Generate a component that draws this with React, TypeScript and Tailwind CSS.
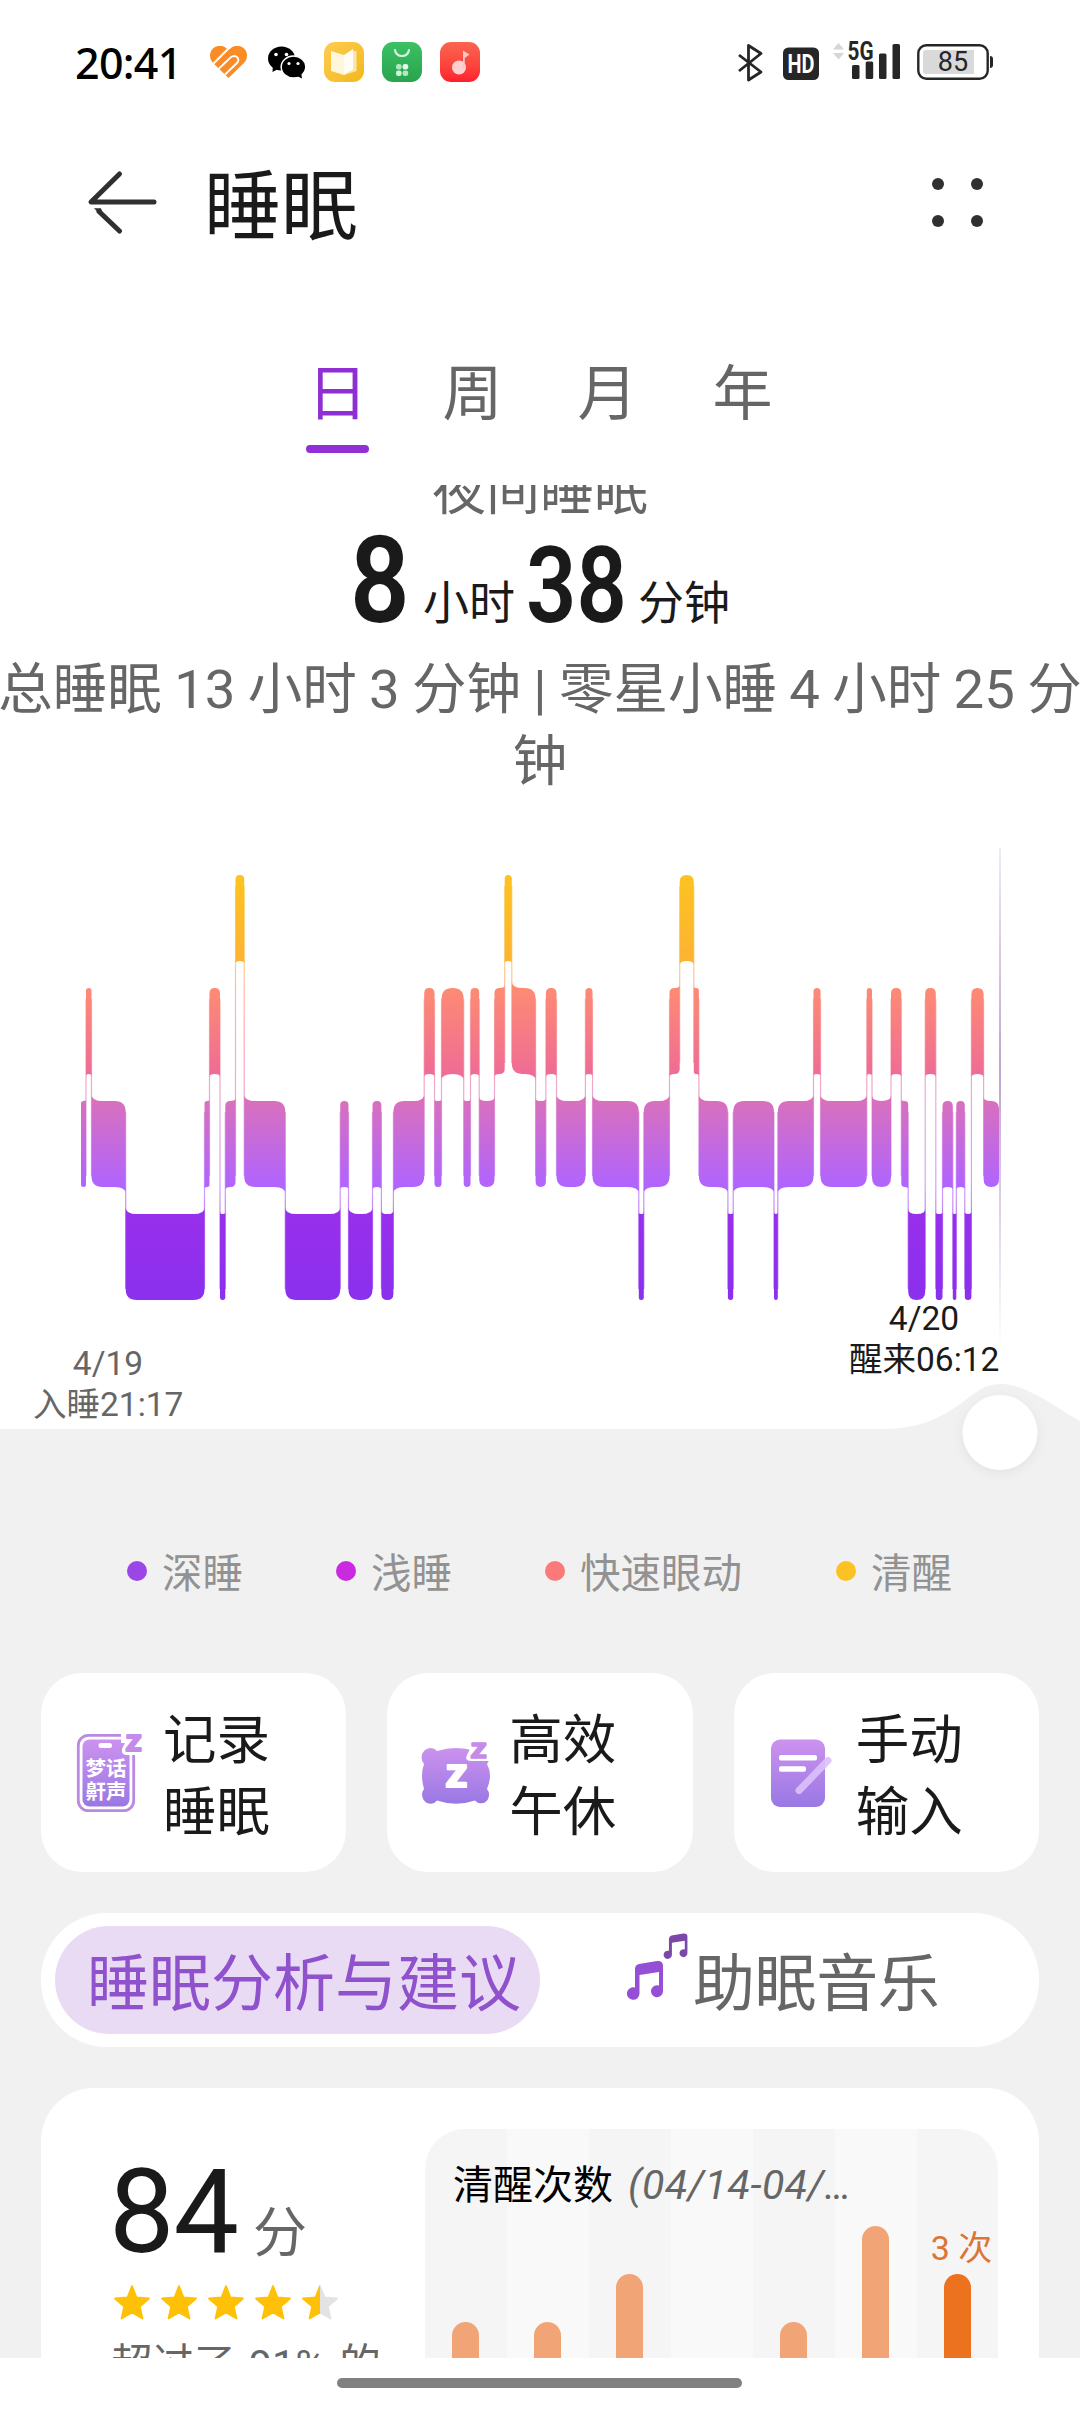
type Stage = 0 | 1 | 2 | 3 // awake, rem, light, deep

const BAND_TOP = 875
const BAND_STEP = 113
const BAND_HEIGHT = 86
const CHART_END = 999

// [start x, stage]; every segment ends where the next one starts
const SEGMENTS: [number, Stage][] = [
  [81, 2],
  [86, 1],
  [91.5, 2],
  [125.7, 3],
  [204.5, 2],
  [209.5, 1],
  [220, 3],
  [225.3, 2],
  [235.5, 0],
  [244.2, 2],
  [285.3, 3],
  [340.2, 2],
  [348.5, 3],
  [372.5, 2],
  [381.4, 3],
  [393.4, 2],
  [424.2, 1],
  [434.5, 2],
  [441.5, 1],
  [463.7, 2],
  [470.5, 1],
  [479.2, 2],
  [494.5, 1],
  [504.7, 0],
  [511.8, 1],
  [535.6, 2],
  [545.9, 1],
  [556.5, 2],
  [585.4, 1],
  [592.5, 2],
  [638.8, 3],
  [643.8, 2],
  [669.5, 1],
  [679.7, 0],
  [693.8, 1],
  [698.9, 2],
  [727.9, 3],
  [733.2, 2],
  [774, 3],
  [777.8, 2],
  [813.5, 1],
  [820.5, 2],
  [866.8, 1],
  [872, 2],
  [891, 1],
  [901.3, 2],
  [908.2, 3],
  [925.2, 1],
  [935.8, 3],
  [942.5, 2],
  [952.8, 3],
  [956.3, 2],
  [964.8, 3],
  [971.4, 1],
  [983.6, 2]
]

const LEGEND = [
  { label: '深睡', dot: 'bg-[#9b46e6]', width: 'w-[209px]' },
  { label: '浅睡', dot: 'bg-[#cb2be0]', width: 'w-[209px]' },
  { label: '快速眼动', dot: 'bg-[#fc7979]', width: 'w-[291px]' },
  { label: '清醒', dot: 'bg-[#fcc122]', width: 'w-[120px]' }
]

const WAKE_COUNTS = [2, 2, 3, 0, 2, 4, 3]

const bandTop = (stage: Stage) => BAND_TOP + stage * BAND_STEP
const bandBottom = (stage: Stage) => bandTop(stage) + BAND_HEIGHT

function bandPath(i: number) {
  const [x0, stage] = SEGMENTS[i]
  const x1 = SEGMENTS[i + 1]?.[0] ?? CHART_END
  const prev = SEGMENTS[i - 1]?.[1]
  const next = SEGMENTS[i + 1]?.[1]
  const top = bandTop(stage)
  const bottom = bandBottom(stage)
  const r = Math.min(11, (x1 - x0) / 2)
  const flare = r * 0.6
  // corners facing a neighbour flare towards it, the others are rounded
  const tl = prev !== undefined && prev < stage ? -flare : r
  const bl = prev !== undefined && prev > stage ? -flare : r
  const tr = next !== undefined && next < stage ? -flare : r
  const br = next !== undefined && next > stage ? -flare : r
  return [
    `M${x0} ${top + tl}Q${x0} ${top} ${x0 + r} ${top}`,
    `H${x1 - r}Q${x1} ${top} ${x1} ${top + tr}`,
    `V${bottom - br}Q${x1} ${bottom} ${x1 - r} ${bottom}`,
    `H${x0 + r}Q${x0} ${bottom} ${x0} ${bottom - bl}Z`
  ].join('')
}

function StatusBar() {
  return (
    <div className="flex h-[124px] shrink-0 items-center pr-[86px] pl-[75px]">
      <span className="w-[135px] font-['Noto_Sans'] text-[43px] leading-none font-medium tracking-[-0.7px] text-black">
        20:41
      </span>
      <svg width="37" height="32" viewBox="0 0 37 32">
        <defs>
          <clipPath id="heart">
            <path d="M18.5 32 3 17C-1 13-1 6 3 2.500C7-1 13-1 16.500 2.500L18.500 4L20.500 2.500C24-1 30-1 34 2.500C38 6 38 13 34 17Z" />
          </clipPath>
        </defs>
        <g clipPath="url(#heart)">
          <rect width="37" height="33" fill="#fb8b24" />
          <path d="M2 19 18 3" stroke="#fff" strokeWidth="2.200" />
          <path
            d="M7 24.500 20.500 11.500Q24.500 8.500 27.500 11.500Q29.500 14.500 27 17L14 29.500"
            fill="none"
            stroke="#fff"
            strokeWidth="1.800"
          />
        </g>
      </svg>
      <svg className="ml-[21px]" width="37" height="33" viewBox="0 0 37 33">
        <path d="M5 18 4.500 26 11 22.500Z" />
        <ellipse cx="13.500" cy="12.500" rx="13.500" ry="12" />
        <ellipse cx="25.500" cy="21" rx="12.300" ry="11" stroke="#fff" strokeWidth="1.500" />
        <path d="M29 30 34 32.500 33 26Z" />
        <g fill="#fff">
          <circle cx="8" cy="8.500" r="1.800" />
          <circle cx="18.500" cy="8.500" r="1.800" />
          <circle cx="21" cy="17.500" r="1.600" />
          <circle cx="30" cy="17.500" r="1.600" />
        </g>
      </svg>
      <div className="ml-[19px] flex size-[40px] items-center justify-center rounded-[11px] bg-linear-to-br from-[#fdcc50] to-[#f2b90f]">
        <svg width="28" height="28" viewBox="0 0 28 28">
          <path d="M1 3 14 7V27L1 23Z" fill="#fff6dc" />
          <path d="M14 7 23 1V22L14 27Z" fill="#fffdf4" />
          <path d="M23 3H26.500V23L14 27L23 22Z" fill="#fbe7ad" />
        </svg>
      </div>
      <div className="ml-[18px] flex size-[40px] items-center justify-center rounded-[11px] bg-linear-to-b from-[#3cc165] to-[#28a44d]">
        <svg width="40" height="40" viewBox="0 0 40 40">
          <path d="M13 8Q14 14 20 14T27 8" fill="none" stroke="#d5f3dc" strokeWidth="2.200" strokeLinecap="round" />
          <g fill="#b5e6c2">
            <rect x="14" y="22" width="5.600" height="5.600" rx="2.300" />
            <rect x="20.600" y="22" width="5.600" height="5.600" rx="2.300" fill="#e6f8ea" />
            <rect x="14" y="28.500" width="5.600" height="5.600" rx="2.300" fill="#d5f3dc" />
            <rect x="20.600" y="28.500" width="5.600" height="5.600" rx="2.300" />
          </g>
        </svg>
      </div>
      <div className="ml-[18px] flex size-[40px] items-center justify-center rounded-[11px] bg-linear-to-b from-[#fb6450] to-[#fd1d2f]">
        <svg width="40" height="40" viewBox="0 0 40 40">
          <circle cx="19" cy="25.500" r="7" fill="#ffd0cf" />
          <path d="M23 26V8.500L29.500 12.500 24.800 16V26Z" fill="#ffc4bf" />
        </svg>
      </div>

      <svg className="ml-auto" width="256" height="50" viewBox="738 37 256 50">
        <path
          d="M739 55 761 72 748.500 80V45.500L761 53.500 739 71"
          fill="none"
          stroke="#262626"
          strokeWidth="2.800"
          strokeLinejoin="round"
        />
        <rect x="783" y="47.500" width="36" height="32.500" rx="5.500" fill="#262626" />
        <text
          x="801"
          y="73"
          fill="#fff"
          textAnchor="middle"
          textLength="27"
          lengthAdjust="spacingAndGlyphs"
          className="font-['Roboto'] text-[25px] font-bold"
        >
          HD
        </text>
        <path d="M833 49.500 838.500 43 844 49.500ZM833 53 838.500 59.500 844 53Z" fill="#d6d6d6" />
        <text
          x="847.500"
          y="60"
          fill="#262626"
          textLength="26"
          lengthAdjust="spacingAndGlyphs"
          className="font-['Roboto'] text-[25px] font-bold"
        >
          5G
        </text>
        <g fill="#262626">
          <rect x="852" y="65" width="7.500" height="14" rx="1.500" />
          <rect x="865.700" y="61.500" width="7.500" height="17.500" rx="1.500" />
          <rect x="879" y="53.500" width="7.500" height="25.500" rx="1.500" />
          <rect x="892.500" y="44" width="7.500" height="35" rx="1.500" />
          <path d="M990 56q3 0 3 3v6q0 3-3 3z" />
        </g>
        <rect x="918.300" y="45.300" width="69.400" height="33.400" rx="8" fill="none" stroke="#262626" strokeWidth="2.400" />
        <path d="M926 50H974V74H926Q923 74 923 71V53Q923 50 926 50Z" fill="#d9d9d9" />
        <text x="953" y="71" fill="#262626" textAnchor="middle" className="font-['Roboto'] text-[27px]">
          85
        </text>
      </svg>
    </div>
  )
}

function Header() {
  return (
    <header className="flex h-[164px] shrink-0 items-center pr-[97px] pl-[87px]">
      <svg
        className="mb-[8px]"
        width="70"
        height="64"
        viewBox="87 169 70 64"
        fill="none"
        stroke="#303030"
        strokeWidth="5"
        strokeLinecap="round"
      >
        <path d="M119.500 173 91 201H154" strokeLinejoin="round" />
        <path d="M99 210.500 119.500 230" />
        <path d="M94 207.200H101L103 213H99.500Z" fill="#303030" stroke="none" />
      </svg>
      <h1 className="mt-[4px] ml-[47px] text-[77px] leading-[80px] text-[#1a1a1a]">睡眠</h1>
      <div className="mb-[8px] ml-auto grid grid-cols-2 gap-x-[27px] gap-y-[25px]">
        <i className="size-[12px] rounded-full bg-[#303030]" />
        <i className="size-[12px] rounded-full bg-[#303030]" />
        <i className="size-[12px] rounded-full bg-[#303030]" />
        <i className="size-[12px] rounded-full bg-[#303030]" />
      </div>
    </header>
  )
}

function PeriodTabs() {
  return (
    <nav className="flex h-[197px] shrink-0 justify-center gap-[73px] pt-[73px] text-[60px] leading-[68px] text-[#666]">
      <div className="flex w-[62px] flex-col items-center text-[#8f2fd3]">
        日
        <span className="mt-[16px] h-[8px] w-[63px] shrink-0 rounded-full bg-[#9130d8]" />
      </div>
      <div className="w-[62px] text-center">周</div>
      <div className="w-[62px] text-center">月</div>
      <div className="w-[62px] text-center">年</div>
    </nav>
  )
}

function Summary() {
  return (
    <section className="flex h-[335px] shrink-0 flex-col items-center bg-white text-[#666]">
      <div className="-mt-[23px] h-[59px] shrink-0 text-[54px] leading-[60px]">夜间睡眠</div>
      <div className="flex h-[132px] shrink-0 items-baseline text-[46px] leading-[114px] text-[#1a1a1a]">
        <span className="inline-block w-[61px] origin-left translate-y-[3px] scale-x-[0.87] text-[120px] font-semibold">
          8
        </span>
        <span className="ml-[12px]">小时</span>
        <span className="ml-[11px] inline-block w-[100px] origin-left translate-y-[3px] scale-x-[0.84] text-[105px] font-semibold">
          38
        </span>
        <span className="ml-[12px]">分钟</span>
      </div>
      <div className="text-center text-[54.5px] leading-[72px] [word-spacing:-1.2px] whitespace-nowrap">
        <div>总睡眠 13 小时 3 分钟 | 零星小睡 4 小时 25 分</div>
        <div>钟</div>
      </div>
    </section>
  )
}

function SleepChart() {
  return (
    <section className="relative h-[680px] shrink-0">
      <svg width="1080" height="680" viewBox="0 820 1080 680">
        <defs>
          <linearGradient id="stages" gradientUnits="userSpaceOnUse" x1="0" y1="875" x2="0" y2="1300">
            <stop offset="0" stopColor="#fcc321" />
            <stop offset="0.202" stopColor="#fcb333" />
            <stop offset="0.266" stopColor="#fd8b73" />
            <stop offset="0.468" stopColor="#ef6c95" />
            <stop offset="0.532" stopColor="#d870bd" />
            <stop offset="0.734" stopColor="#b064ff" />
            <stop offset="0.798" stopColor="#982fec" />
            <stop offset="1" stopColor="#8a30ee" />
          </linearGradient>
          <linearGradient id="cursor" x1="0" y1="0" x2="0" y2="1">
            <stop offset="0" stopColor="#b79acb" stopOpacity="0.2" />
            <stop offset="0.450" stopColor="#b79acb" stopOpacity="0.9" />
            <stop offset="1" stopColor="#b79acb" stopOpacity="0" />
          </linearGradient>
        </defs>
        <rect y="820" width="1080" height="680" fill="#f1f1f1" />
        <path
          d="M0 820H1080V1421C1064 1413 1052 1402 1036 1395C1024 1389 1014 1384 1000 1384C982 1384 972 1396 956 1407C934 1421 916 1429 880 1429H0Z"
          fill="#fff"
        />
        <rect x="999" y="848" width="2" height="500" fill="url(#cursor)" />
        <g fill="url(#stages)">
          {SEGMENTS.map(([x], i) => (
            <path key={x} d={bandPath(i)} />
          ))}
          {SEGMENTS.slice(1).map(([x, stage], i) => {
            const prev = SEGMENTS[i][1]
            const upper = Math.min(prev, stage) as Stage
            const lower = Math.max(prev, stage) as Stage
            const y = bandTop(upper) + 11
            return (
              <rect
                key={x}
                x={x - 0.6}
                y={y}
                width="1.200"
                height={bandBottom(lower) - 11 - y}
                opacity="0.600"
              />
            )
          })}
        </g>
        <circle cx="1000" cy="1432.500" r="37.500" fill="#fff" className="drop-shadow-[0_3px_6px_rgba(0,0,0,0.06)]" />
      </svg>
      <div className="absolute top-[523px] left-[33px] w-[150px] text-center text-[33.5px] leading-[41px] text-[#666]">
        <div>4/19</div>
        <div className="whitespace-nowrap">入睡21:17</div>
      </div>
      <div className="absolute top-[478px] left-[849px] w-[150px] text-center text-[33.5px] leading-[41px] text-[#1a1a1a]">
        <div>4/20</div>
        <div className="whitespace-nowrap">醒来06:12</div>
      </div>
    </section>
  )
}

function IconGradient({ id }: { id: string }) {
  return (
    <defs>
      <linearGradient id={id} x1="0" y1="0" x2="0" y2="1">
        <stop offset="0" stopColor="#cc92ee" />
        <stop offset="1" stopColor="#9978e4" />
      </linearGradient>
    </defs>
  )
}

function RecordIcon() {
  return (
    <svg width="72" height="84" viewBox="72 1730 72 84">
      <IconGradient id="phone" />
      <rect x="77.300" y="1734.300" width="55.400" height="75.400" rx="10" fill="none" stroke="#b98ae0" strokeWidth="2.800" />
      <rect x="81.500" y="1738.500" width="47" height="67" rx="7" fill="url(#phone)" />
      <rect x="97.500" y="1742" width="13.500" height="5" rx="2.500" fill="#fff" />
      <g fill="#fff" className="font-['Noto_Sans_CJK_SC'] text-[20.5px] font-bold">
        <text x="84.500" y="1775">梦话</text>
        <text x="84.500" y="1798">鼾声</text>
      </g>
      {/* white halo cuts the corner off the phone */}
      <path d="M120 1731H144V1754H126Q120 1754 121 1748L124 1742H120Z" fill="#fff" />
      <text
        x="124.500"
        y="1750"
        fill="#c48be8"
        stroke="#c48be8"
        strokeWidth="1.800"
        strokeLinejoin="round"
        textLength="16"
        lengthAdjust="spacingAndGlyphs"
        className="font-['Noto_Sans_CJK_SC'] text-[21px] font-black"
      >
        Z
      </text>
    </svg>
  )
}

function NapIcon() {
  return (
    <svg width="72" height="84" viewBox="419 1730 72 84">
      <IconGradient id="pillow" />
      <path
        d="M437 1750Q456 1744 475 1750A7.500 8 0 0 1 487 1763Q493 1774 487 1788A7.500 8 0 0 1 475 1799.500Q456 1806 437 1799.500A7.500 8 0 0 1 424 1788Q420 1774 424 1763A7.500 8 0 0 1 437 1750Z"
        fill="url(#pillow)"
      />
      <path d="M466 1738H491V1760H472Q464 1760 467 1754L470 1748H466Z" fill="#fff" />
      <g className="font-['Noto_Sans_CJK_SC'] font-black" strokeLinejoin="round">
        <text
          x="445.500"
          y="1785.500"
          fill="#fff"
          stroke="#fff"
          strokeWidth="2"
          textLength="21.500"
          lengthAdjust="spacingAndGlyphs"
          className="text-[29px]"
        >
          Z
        </text>
        <text
          x="470.500"
          y="1756.500"
          fill="#c48be8"
          stroke="#c48be8"
          strokeWidth="1.600"
          textLength="16"
          lengthAdjust="spacingAndGlyphs"
          className="text-[20px]"
        >
          Z
        </text>
      </g>
    </svg>
  )
}

function ManualIcon() {
  return (
    <svg width="72" height="84" viewBox="768 1730 72 84">
      <IconGradient id="note" />
      <rect x="773" y="1738.500" width="54" height="67.500" rx="9" fill="url(#note)" />
      <rect x="781" y="1754" width="38" height="5.500" rx="2" fill="#fff" />
      <rect x="781" y="1765.300" width="27" height="5.500" rx="2" fill="#fff" />
      <path d="M801 1789.500 830 1759.500" stroke="#dcc2fb" strokeWidth="7" strokeLinecap="round" opacity="0.900" />
    </svg>
  )
}

function Action({ icon, lines }: { icon: React.ReactNode; lines: [string, string] }) {
  return (
    <button className="flex h-[199px] items-center rounded-[41px] bg-white pl-[32px] text-left text-[53.5px] leading-[72px] text-[#1a1a1a]">
      {icon}
      <span className="mt-[9px] ml-[18px]">
        {lines[0]}
        <br />
        {lines[1]}
      </span>
    </button>
  )
}

function MusicNotes() {
  const note =
    'M634 1969Q634 1965 638 1964L656 1961Q662 1960.500 662 1966V1991A6 6 0 1 1 658 1985.500V1972L638.500 1975V1993.500A6.300 6.300 0 1 1 634 1987.500Z'
  return (
    <svg className="mb-[29px]" width="64" height="70" viewBox="626 1931 64 70">
      <path d={note} fill="#944fd4" />
      <path d={note} fill="#7a48a8" transform="translate(249.500 649) scale(0.660 0.655)" />
    </svg>
  )
}

function ScoreCard() {
  const star = 'M18 1 22.500 12.500 35 13.500 25.800 21.500 28.500 33.500 18 27.500 7.500 33.500 10.200 21.500 1 13.500 13.500 12.500Z'
  return (
    <section className="mx-[41px] mt-[41px] flex h-[400px] shrink-0 rounded-t-[53px] bg-white pr-[41px]">
      <div className="w-[384px] shrink-0 pt-[62px] pl-[68px] whitespace-nowrap text-[#666]">
        <div className="flex h-[125px] items-baseline leading-[125px]">
          <span className="text-[116.5px] tracking-[-1px] text-[#1a1a1a]">84</span>
          <span className="ml-[15px] text-[54px]">分</span>
        </div>
        <div className="mt-[10px] ml-[5px] flex gap-[11px]">
          {[0, 1, 2, 3].map((n) => (
            <svg key={n} width="36" height="36" viewBox="0 0 36 36">
              <path d={star} fill="#ffc107" stroke="#ffc107" strokeWidth="1.800" strokeLinejoin="round" />
            </svg>
          ))}
          <svg width="36" height="36" viewBox="0 0 36 36">
            <defs>
              <linearGradient id="half">
                <stop offset="0.500" stopColor="#ffc107" />
                <stop offset="0.500" stopColor="#e3e3e3" />
              </linearGradient>
            </defs>
            <path d={star} fill="url(#half)" stroke="url(#half)" strokeWidth="1.800" strokeLinejoin="round" />
          </svg>
        </div>
        <div className="mt-[19px] ml-[2px] text-[41.5px] leading-[50px] [word-spacing:3px]">超过了 91% 的</div>
      </div>
      <div className="mt-[41px] flex w-[573px] shrink-0 flex-col overflow-hidden rounded-t-[40px] bg-[repeating-linear-gradient(90deg,#f5f5f5_0_82px,#f9f9f9_82px_164px)]">
        <div className="mt-[31px] flex h-[49px] shrink-0 items-baseline pl-[28px] leading-[50px] whitespace-nowrap">
          <span className="text-[40px] text-black">清醒次数</span>
          <span className="ml-[15px] text-[41px] tracking-[0.5px] text-[#666] italic">(04/14-04/…</span>
        </div>
        <div className="flex h-[340px] shrink-0 items-end gap-[55px] pl-[27px]">
          {WAKE_COUNTS.map((count, i) => {
            const last = i === WAKE_COUNTS.length - 1
            return (
              <div key={i} className="flex w-[27px] shrink-0 flex-col items-center">
                {last && (
                  <span className="mb-[5px] pl-[8px] text-[34px] leading-[42px] whitespace-nowrap text-[#dc7434]">
                    3 次
                  </span>
                )}
                <span
                  className={last ? 'w-[27px] rounded-t-full bg-[#ec7220]' : 'w-[27px] rounded-t-full bg-[#f1a576]'}
                  style={{ height: count ? count * 48 + 131 : 0 }}
                />
              </div>
            )
          })}
        </div>
      </div>
    </section>
  )
}

export default function App() {
  return (
    <div
      lang="zh-CN"
      className="flex h-[2412px] w-[1080px] flex-col overflow-hidden bg-white font-['Roboto','Noto_Sans_CJK_SC',sans-serif]"
    >
      <StatusBar />
      <Header />
      <PeriodTabs />
      <main className="flex h-[1873px] shrink-0 flex-col overflow-hidden bg-[#f1f1f1]">
        <Summary />
        <SleepChart />

        {/* Stage legend */}
        <div className="flex h-[144px] shrink-0 pl-[127px] text-[40.5px] text-[#929292]">
          {LEGEND.map(({ label, dot, width }) => (
            <div key={label} className={`flex h-[142px] items-center ${width}`}>
              <i className={`size-[20px] shrink-0 rounded-full ${dot}`} />
              <span className="mt-[6px] ml-[15px] whitespace-nowrap">{label}</span>
            </div>
          ))}
        </div>

        <div className="mx-[41px] mt-[29px] grid shrink-0 grid-cols-3 gap-[41px]">
          <Action icon={<RecordIcon />} lines={['记录', '睡眠']} />
          <Action icon={<NapIcon />} lines={['高效', '午休']} />
          <Action icon={<ManualIcon />} lines={['手动', '输入']} />
        </div>

        <div className="mx-[41px] mt-[41px] flex h-[134px] shrink-0 items-center rounded-[66px] bg-white pl-[14px] text-[62px] text-[#666]">
          <div className="flex h-[108px] w-[485px] items-center justify-center rounded-full bg-[#eadbf5] pt-[8px] pl-[13px] whitespace-nowrap text-[#8f52cc]">
            睡眠分析与建议
          </div>
          <div className="ml-[87px] flex items-center">
            <MusicNotes />
            <span className="mt-[8px] ml-[2px] tracking-[-0.4px]">助眠音乐</span>
          </div>
        </div>

        <ScoreCard />
      </main>
      <footer className="flex h-[54px] justify-center pt-[20px] pr-[1px]">
        <span className="h-[10px] w-[405px] rounded-full bg-[#808080]" />
      </footer>
    </div>
  )
}
